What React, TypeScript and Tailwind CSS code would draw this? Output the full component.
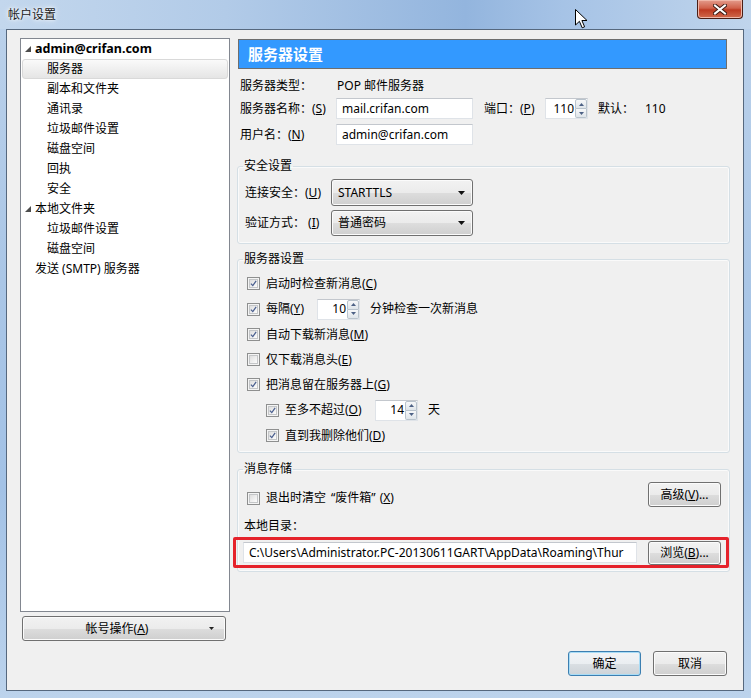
import React from 'react';

const btnFace =
  'border border-[#707070] rounded-[3px] bg-[linear-gradient(to_bottom,#f2f2f2_0%,#ebebeb_50%,#dddddd_51%,#cfcfcf_100%)] shadow-[inset_0_0_0_1px_#fbfbfb]';

function Check({ checked }: { checked: boolean }) {
  return (
    <div className="w-[13px] h-[13px] shrink-0 border border-[#8e8f8f] bg-[#f4f4f4] p-[1px]">
      <div className="w-full h-full border border-[#c4c6c8] bg-[linear-gradient(135deg,#dedede,#fcfcfc)] flex items-center justify-center">
        {checked && (
          <svg width="9" height="9" viewBox="0 0 9 9">
            <path d="M1.2 4.6 L3.6 7.2 L7.9 1.2" fill="none" stroke="#4a5f8f" strokeWidth="1.6" />
          </svg>
        )}
      </div>
    </div>
  );
}

function TextBox({ value, className }: { value: string; className: string }) {
  return (
    <div
      className={`h-[21px] bg-white border border-[#dfe3e8] border-t-[#c3c7cd] flex items-center pl-[5px] overflow-hidden whitespace-nowrap ${className}`}
    >
      {value}
    </div>
  );
}

function Spin({ value }: { value: string }) {
  return (
    <div className="w-[43px] h-[21px] shrink-0 bg-white border border-[#dfe3e8] border-t-[#c3c7cd] flex">
      <div className="flex-1 flex items-center justify-end pr-[1px]">{value}</div>
      <div className="w-[12px] flex flex-col">
        <div className="flex-1 border border-[#b9c3cc] rounded-t-[2px] bg-[linear-gradient(to_bottom,#f7f8f9,#dfe5ea)] flex items-center justify-center">
          <svg width="5" height="3" viewBox="0 0 5 3">
            <path d="M0 3 L2.5 0 L5 3 Z" fill="#4d6185" />
          </svg>
        </div>
        <div className="flex-1 border border-t-0 border-[#b9c3cc] rounded-b-[2px] bg-[linear-gradient(to_bottom,#f7f8f9,#dfe5ea)] flex items-center justify-center">
          <svg width="5" height="3" viewBox="0 0 5 3">
            <path d="M0 0 L2.5 3 L5 0 Z" fill="#4d6185" />
          </svg>
        </div>
      </div>
    </div>
  );
}

function Combo({ value, className }: { value: string; className: string }) {
  return (
    <div className={`w-[142px] flex items-center pl-[6px] pr-[7px] ${btnFace} ${className}`}>
      <span className="flex-1">{value}</span>
      <svg width="7" height="4" viewBox="0 0 7 4">
        <path d="M0 0 L7 0 L3.5 4 Z" fill="#111" />
      </svg>
    </div>
  );
}

function Button({
  children,
  className,
  primary,
}: {
  children: React.ReactNode;
  className: string;
  primary?: boolean;
}) {
  return (
    <div
      className={`flex items-center justify-center ${
        primary
          ? 'border border-[#3c7fb1] rounded-[3px] bg-[linear-gradient(to_bottom,#f2f4f6_0%,#eaeef1_50%,#dadfe3_51%,#cdd3d8_100%)] shadow-[inset_0_0_0_1px_#a8dcf6]'
          : btnFace
      } ${className}`}
    >
      {children}
    </div>
  );
}

function Expander() {
  return (
    <svg width="6" height="6" viewBox="0 0 6 6" className="shrink-0">
      <path d="M6 0 L6 6 L0 6 Z" fill="#4d4d4d" />
    </svg>
  );
}

function Legend({ children }: { children: React.ReactNode }) {
  return <legend className="ml-[-1px] px-[1px] leading-[16px]">{children}</legend>;
}

export default function App() {
  const subItems = ['副本和文件夹', '通讯录', '垃圾邮件设置', '磁盘空间', '回执', '安全'];

  return (
    <div className="relative w-[751px] h-[698px] overflow-hidden text-[12px] text-black font-['Noto_Sans','Noto_Sans_CJK_SC',sans-serif] bg-[linear-gradient(to_bottom,#bcd2eb,#aac6e6_40%,#a3c2e6_70%,#bcd3ec)]">
      {/* 标题栏 */}
      <div className="h-[29px] flex items-start bg-[linear-gradient(to_right,#c3d7ed_0%,#b2cbe8_30%,#93b5de_62%,#a6c3e6_75%,#c0d5ec_100%)]">
        <span className="mt-[6px] ml-[8px] text-[#1b1b1b] [text-shadow:0_0_6px_#fff,0_0_3px_#fff]">帐户设置</span>
        <div className="ml-auto mr-[8px] w-[46px] h-[19px] rounded-b-[4px] border border-t-0 border-[#4a1e16] bg-[linear-gradient(to_bottom,#e49c8c_0%,#d0614a_45%,#bd3a22_55%,#d06a4d_100%)] shadow-[inset_0_0_0_1px_#f0b7a8] flex items-center justify-center">
          <svg width="14" height="11" viewBox="0 0 14 11">
            <path d="M2 1.5 L12 9.5 M12 1.5 L2 9.5" stroke="#3b1a14" strokeWidth="4" strokeLinecap="square" />
            <path d="M2 1.5 L12 9.5 M12 1.5 L2 9.5" stroke="#ffffff" strokeWidth="2" strokeLinecap="square" />
          </svg>
        </div>
      </div>

      {/* 鼠标指针 */}
      <svg className="absolute left-[575px] top-[9px]" width="13" height="20" viewBox="0 0 13 20">
        <path d="M0.5 0.5 L0.5 16 L4.4 12.3 L7.2 18.8 L9.6 17.8 L6.9 11.5 L12 11.5 Z" fill="#fff" stroke="#000" strokeWidth="1" />
      </svg>

      {/* 客户区 */}
      <div className="ml-[6px] w-[738px] h-[662px] border border-[#56687e] bg-[#f0f0f0] flex flex-col">
        <div className="flex pt-[8px] pl-[13px]">
          {/* 左侧账户树 */}
          <div className="w-[210px] flex flex-col">
            <div className="h-[574px] border border-[#828790] bg-white">
              <div className="h-[20px] flex items-center pl-[4px] gap-[4px] font-bold text-[12.5px]">
                <Expander />
                <span>admin@crifan.com</span>
              </div>
              <div className="h-[20px] mx-[1px] flex items-center pl-[24px] rounded-[3px] border border-[#d9d9d9] bg-[linear-gradient(to_bottom,#fafafa,#e5e5e5)]">
                服务器
              </div>
              {subItems.map((s) => (
                <div key={s} className="h-[20px] flex items-center pl-[26px]">
                  {s}
                </div>
              ))}
              <div className="h-[20px] flex items-center pl-[4px] gap-[4px]">
                <Expander />
                <span>本地文件夹</span>
              </div>
              <div className="h-[20px] flex items-center pl-[26px]">垃圾邮件设置</div>
              <div className="h-[20px] flex items-center pl-[26px]">磁盘空间</div>
              <div className="h-[20px] flex items-center pl-[14px]">发送 (SMTP) 服务器</div>
            </div>
            <div className={`mt-[4px] ml-[2px] w-[204px] h-[25px] flex items-center ${btnFace}`}>
              <span className="flex-1 text-center pl-[2px]">
                帐号操作(<u>A</u>)
              </span>
              <svg width="5" height="3" viewBox="0 0 5 3" className="mr-[11px]">
                <path d="M0 0 L5 0 L2.5 3 Z" fill="#222" />
              </svg>
            </div>
          </div>

          {/* 右侧设置面板 */}
          <div className="ml-[7px] w-[493px] flex flex-col">
            <div className="mt-[1px] ml-[1px] w-[489px] h-[30px] bg-[#3399ff] border border-[#6e6e6e] flex items-center pl-[9px] text-white font-bold text-[15px]">
              服务器设置
            </div>

            <div className="mt-[7px] h-[20px] flex items-center pl-[3px]">
              <span className="w-[96px]">服务器类型：</span>
              <span className="pl-[1px]">POP 邮件服务器</span>
            </div>
            <div className="mt-[2px] h-[21px] flex items-center pl-[3px]">
              <span className="w-[96px]">
                服务器名称：(<u>S</u>)
              </span>
              <TextBox value="mail.crifan.com" className="w-[137px]" />
              <span className="ml-[11px] w-[61px]">
                端口：(<u>P</u>)
              </span>
              <Spin value="110" />
              <span className="ml-[10px] w-[47px]">默认：</span>
              <span>110</span>
            </div>
            <div className="mt-[5px] h-[21px] flex items-center pl-[3px]">
              <span className="w-[96px]">
                用户名：(<u>N</u>)
              </span>
              <TextBox value="admin@crifan.com" className="w-[137px]" />
            </div>

            {/* 安全设置 */}
            <fieldset className="mt-[13px] border border-[#d5dfe5] rounded-[3px] px-[6px] pb-[7px] shadow-[inset_0_0_0_1px_#fafafa]">
              <Legend>安全设置</Legend>
              <div className="pt-[5px] pl-[1px]">
                <div className="h-[27px] flex items-center">
                  <span className="w-[86px]">
                    连接安全：(<u>U</u>)
                  </span>
                  <Combo value="STARTTLS" className="h-[27px]" />
                </div>
                <div className="mt-[4px] h-[26px] flex items-center">
                  <span className="w-[86px]">
                    验证方式： (<u>I</u>)
                  </span>
                  <Combo value="普通密码" className="h-[26px]" />
                </div>
              </div>
            </fieldset>

            {/* 服务器设置 */}
            <fieldset className="mt-[7px] border border-[#d5dfe5] rounded-[3px] px-[6px] pb-[4px] shadow-[inset_0_0_0_1px_#fafafa]">
              <Legend>服务器设置</Legend>
              <div className="pt-[4px] pl-[3px]">
                <div className="h-[25px] flex items-center gap-[6px]">
                  <Check checked />
                  <span>
                    启动时检查新消息(<u>C</u>)
                  </span>
                </div>
                <div className="h-[26px] flex items-center">
                  <Check checked />
                  <span className="ml-[6px] w-[51px]">
                    每隔(<u>Y</u>)
                  </span>
                  <Spin value="10" />
                  <span className="ml-[10px]">分钟检查一次新消息</span>
                </div>
                <div className="h-[25px] flex items-center gap-[6px]">
                  <Check checked />
                  <span>
                    自动下载新消息(<u>M</u>)
                  </span>
                </div>
                <div className="h-[25px] flex items-center gap-[6px]">
                  <Check checked={false} />
                  <span>
                    仅下载消息头(<u>E</u>)
                  </span>
                </div>
                <div className="h-[25px] flex items-center gap-[6px]">
                  <Check checked />
                  <span>
                    把消息留在服务器上(<u>G</u>)
                  </span>
                </div>
                <div className="h-[26px] flex items-center pl-[19px]">
                  <Check checked />
                  <span className="ml-[6px] w-[90px]">
                    至多不超过(<u>O</u>)
                  </span>
                  <Spin value="14" />
                  <span className="ml-[10px]">天</span>
                </div>
                <div className="h-[25px] flex items-center gap-[6px] pl-[19px]">
                  <Check checked />
                  <span>
                    直到我删除他们(<u>D</u>)
                  </span>
                </div>
              </div>
            </fieldset>

            {/* 消息存储 */}
            <fieldset className="mt-[8px] border border-[#d5dfe5] rounded-[3px] px-[6px] pb-[3px] shadow-[inset_0_0_0_1px_#fafafa]">
              <Legend>消息存储</Legend>
              <div className="pt-[5px]">
                <div className="h-[25px] flex items-center pl-[3px] pr-[2px]">
                  <div className="mt-[7px] flex items-center gap-[6px]">
                    <Check checked={false} />
                    <span>
                      退出时清空<span className="ml-[5px]">“</span>废件箱<span className="mr-[4px]">”</span>(<u>X</u>)
                    </span>
                  </div>
                  <Button className="ml-auto w-[73px] h-[25px]">
                    <span>
                      高级(<u>V</u>)...
                    </span>
                  </Button>
                </div>
                <div className="mt-[10px] h-[18px] flex items-center">本地目录：</div>
                <div className="mt-[2px] -ml-[11px] -mr-[6px] h-[31px] border-[3px] border-[#e5222b] rounded-[2px] flex items-center pl-[7px] pr-[5px]">
                  <TextBox
                    value="C:\Users\Administrator.PC-20130611GART\AppData\Roaming\Thur"
                    className="w-[394px]"
                  />
                  <Button className="ml-[11px] w-[73px] h-[24px]">
                    <span>
                      浏览(<u>B</u>)...
                    </span>
                  </Button>
                </div>
              </div>
            </fieldset>
          </div>
        </div>

        {/* 底部按钮 */}
        <div className="mt-[10px] flex justify-end gap-[12px] pr-[16px]">
          <Button primary className="w-[73px] h-[25px]">
            确定
          </Button>
          <Button className="w-[74px] h-[25px]">取消</Button>
        </div>
      </div>
    </div>
  );
}
